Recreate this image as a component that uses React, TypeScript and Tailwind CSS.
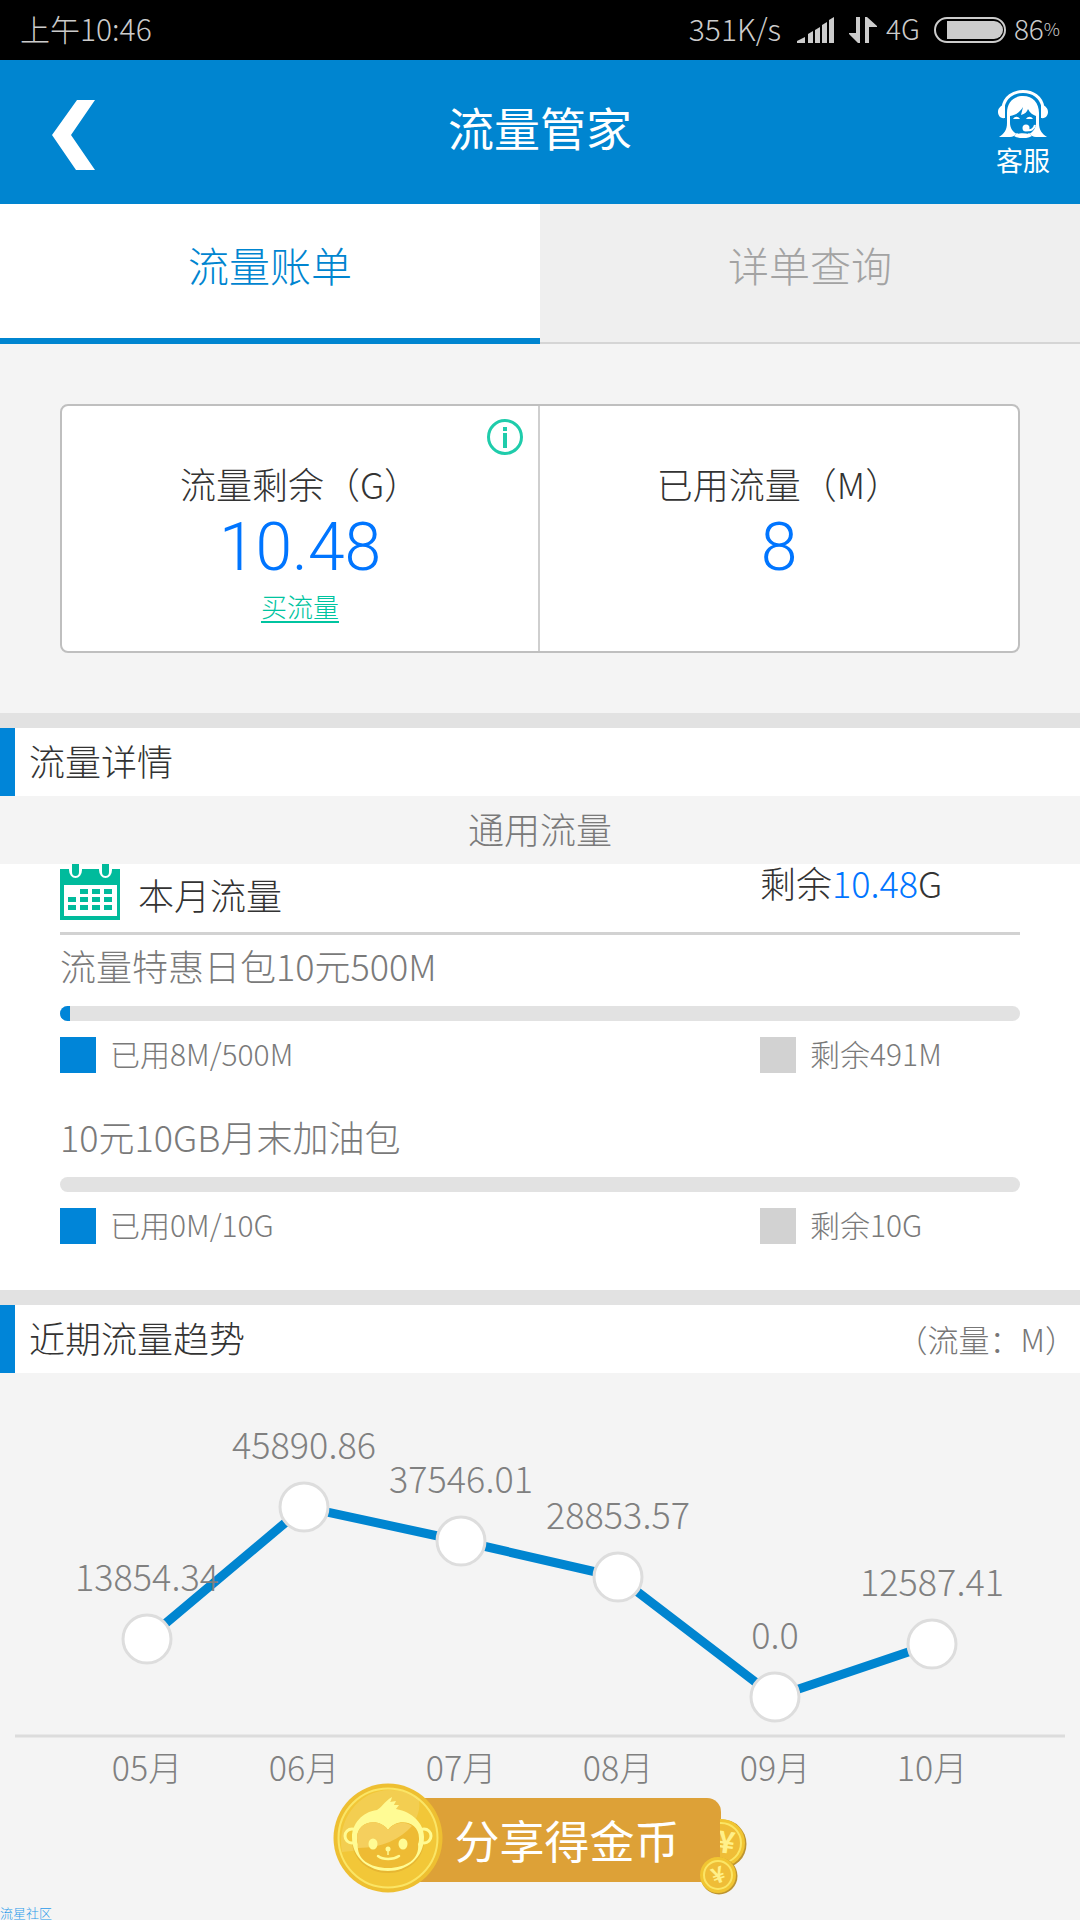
import React from "react";

type Plan = {
  name: string;
  used: string;
  left: string;
  percent: number;
};

const plans: Plan[] = [
  { name: "流量特惠日包10元500M", used: "已用8M/500M", left: "剩余491M", percent: 1 },
  { name: "10元10GB月末加油包", used: "已用0M/10G", left: "剩余10G", percent: 0 },
];

const trend = [
  { month: "05月", value: "13854.34", x: 147, y: 266 },
  { month: "06月", value: "45890.86", x: 304, y: 134 },
  { month: "07月", value: "37546.01", x: 461, y: 168 },
  { month: "08月", value: "28853.57", x: 618, y: 204 },
  { month: "09月", value: "0.0", x: 775, y: 324 },
  { month: "10月", value: "12587.41", x: 932, y: 271 },
];

function StatusBar() {
  return (
    <div className="flex h-[60px] items-center justify-between bg-black pr-5 pb-1 pl-5 text-[30px] text-[#cccccc]">
      <span>上午10:46</span>
      <div className="flex items-center">
        <span>351K/s</span>
        <svg className="mt-1 ml-4 h-[26px] w-[38px]" viewBox="0 0 38 26" fill="#cccccc" aria-hidden="true">
          <path d="M0 26v-2l8-4v6z" />
          <path d="M11 26v-9l5-3v12z" />
          <path d="M18 26V13l5-3v16z" />
          <path d="M25 26V8l5-3v21z" />
          <path d="M32 26V3l5-3v26z" />
        </svg>
        <svg className="mt-1 ml-[14px] h-[26px] w-[28px]" viewBox="0 0 28 26" fill="#cccccc" aria-hidden="true">
          <path d="M7 0h4v26H9L0 17v-1h7z" />
          <path d="M16 26h4V10h8V9L18 0h-2z" />
        </svg>
        <span className="ml-[9px] text-[28px]">4G</span>
        <svg className="mt-1 ml-[14px] h-[26px] w-[72px]" viewBox="0 0 72 26" aria-hidden="true">
          <rect x="1" y="1" width="70" height="24" rx="12" fill="none" stroke="#cccccc" strokeWidth="2" />
          <path d="M13 4h47a9 9 0 0 1 0 18H13z" fill="#cccccc" />
        </svg>
        <span className="ml-2 text-[28px]">86</span>
        <span className="text-[18px]">%</span>
      </div>
    </div>
  );
}

function ServiceIcon() {
  return (
    <svg className="h-[48px] w-[52px]" viewBox="0 0 52 48" aria-hidden="true">
      <path d="M6 17C8 7 16 1.500 26 1.500S44 7 46 17" fill="none" stroke="#fff" strokeWidth="3" />
      <path d="M8 15v13C3 29 1 25 1 22c0-4 3-6 5-7zM44 15v13c5 1 7-3 7-6 0-4-3-6-5-7z" fill="#fff" />
      <path
        d="M26 6C16 6 10 13 10 23v10c0 7-3 11-8 14h11c3 0 5-2 6-3 4 4 10 4 14 0 1 1 3 3 6 3h11c-5-3-8-7-8-14V23C42 13 36 6 26 6z"
        fill="#fff"
      />
      <path
        d="M13 26c6-1 10-4 13-9l-2 8c4-1 6-3 7-6 2 4 5 6 8 7v7c0 5-3 9-7 11-4-1-9-1-12 0-4-2-7-6-7-11z"
        fill="#0085d0"
      />
      <path d="M16 29c2-3 5-3 7 0zM29 29c2-3 5-3 7 0z" fill="#fff" />
      <circle cx="29" cy="38" r="3.500" fill="#fff" />
      <path d="M30 40c4 1 7-1 8-5" fill="none" stroke="#fff" strokeWidth="2" />
      <path d="M20 43c3 3 9 3 12 0l3 3c-5 3-13 3-18 0z" fill="#fff" />
    </svg>
  );
}

function Header() {
  return (
    <header className="grid h-[144px] grid-cols-[1fr_auto_1fr] items-center bg-[#0085d0] font-normal text-white">
      <button type="button" aria-label="返回" className="justify-self-start pt-[6px] pl-[52px]">
        <svg className="h-[70px] w-[44px]" viewBox="0 0 44 70" fill="#fff" aria-hidden="true">
          <path d="M25 0h18L19 35l24 35H24L0 35z" />
        </svg>
      </button>
      <h1 className="pb-3 text-[46px]">流量管家</h1>
      <button type="button" className="flex flex-col items-center justify-self-end pt-2 pr-[30px] text-[27px] leading-[44px]">
        <ServiceIcon />
        <span>客服</span>
      </button>
    </header>
  );
}

function Tabs() {
  return (
    <div role="tablist" className="grid h-[140px] grid-cols-2 text-[41px]">
      <button type="button" role="tab" aria-selected="true" className="border-b-6 border-[#0085d0] bg-white pb-3 text-[#0085d0]">
        流量账单
      </button>
      <button type="button" role="tab" aria-selected="false" className="border-b-2 border-[#d5d5d5] bg-[#efefef] pb-4 text-[#a3a3a3]">
        详单查询
      </button>
    </div>
  );
}

function Summary() {
  return (
    <section className="bg-[#f4f4f4] px-[60px] py-[60px]">
      <div className="grid h-[249px] grid-cols-2 rounded-lg border-2 border-[#bfbfbf] bg-white text-center">
        <div className="relative border-r-2 border-[#cfcfcf] pt-[50px]">
          <button type="button" aria-label="流量说明" className="absolute top-[13px] right-[15px]">
            <svg className="h-[36px] w-[36px]" viewBox="0 0 36 36" aria-hidden="true">
              <circle cx="18" cy="18" r="16.500" fill="none" stroke="#1fccab" strokeWidth="3" />
              <path d="M16 8h4v4h-4zM16 14h4v15h-4z" fill="#1fccab" />
            </svg>
          </button>
          <h2 className="text-[36px] leading-[54px] text-[#333333]">流量剩余（G）</h2>
          <p className="font-[Roboto] text-[66px] leading-[76px] text-[#0075ff]">10.48</p>
          <a href="#buy" className="inline-block text-[26px] leading-[40px] text-[#00c4a0] underline decoration-2 underline-offset-4">
            买流量
          </a>
        </div>
        <div className="pt-[50px]">
          <h2 className="text-[36px] leading-[54px] text-[#333333]">已用流量（M）</h2>
          <p className="font-[Roboto] text-[66px] leading-[76px] text-[#0075ff]">8</p>
        </div>
      </div>
    </section>
  );
}

function SectionHeader({ title, note }: { title: string; note?: string }) {
  return (
    <div className="flex h-[83px] items-center justify-between border-t-[15px] border-[#e2e2e2] bg-white">
      <h2 className="flex h-full items-center border-l-[15px] border-[#0085d8] pb-1 pl-[14px] text-[36px] text-[#333333]">{title}</h2>
      {note && <span className="pr-1 text-[31px] text-[#777777]">{note}</span>}
    </div>
  );
}

function PlanRow({ plan }: { plan: Plan }) {
  return (
    <div className="h-[171px]">
      <h4 className="text-[36px] leading-[60px] text-[#7a7a7a]">{plan.name}</h4>
      <div
        role="progressbar"
        aria-label={plan.name}
        aria-valuenow={plan.percent}
        className="mt-[11px] h-[15px] overflow-hidden rounded-full bg-[#e2e2e2]"
      >
        <div className="h-full bg-[#0085d8]" style={{ width: `${plan.percent}%` }} />
      </div>
      <div className="mt-4 grid grid-cols-[700fr_260fr] text-[30px] leading-[32px] text-[#7a7a7a]">
        <div className="flex gap-[14px]">
          <span className="h-[36px] w-[36px] bg-[#0085d8]" />
          {plan.used}
        </div>
        <div className="flex gap-[14px]">
          <span className="h-[36px] w-[36px] bg-[#d2d2d2]" />
          {plan.left}
        </div>
      </div>
    </div>
  );
}

function CalendarIcon() {
  return (
    <svg className="h-[56px] w-[60px]" viewBox="0 0 60 56" aria-hidden="true">
      <path d="M0 5h60v51H0z" fill="#00bb9c" />
      <path d="M4 21h53v31H4z" fill="#fff" />
      <path d="M9 0h13v6a6.500 8 0 0 1-13 0zM39 0h13v6a6.500 8 0 0 1-13 0z" fill="#fff" />
      <path d="M12 0h7v8a3.500 4 0 0 1-7 0zM42 0h7v8a3.500 4 0 0 1-7 0z" fill="#00bb9c" />
      <path
        d="M20 25h8v5h-8zM32 25h8v5h-8zM44 25h8v5h-8zM8 33h8v5H8zM20 33h8v5h-8zM32 33h8v5h-8zM44 33h8v5h-8zM8 41h8v5H8zM20 41h8v5h-8zM32 41h8v5h-8zM44 41h8v5h-8z"
        fill="#00bb9c"
      />
    </svg>
  );
}

function Details() {
  return (
    <section>
      <SectionHeader title="流量详情" />
      <p className="bg-[#f4f4f4] pb-1 text-center text-[36px] leading-[64px] text-[#7a7a7a]">通用流量</p>
      <div className="bg-white px-[60px] pb-[13px]">
        <div className="grid h-[71px] grid-cols-[700fr_260fr] items-start border-b-3 border-[#d2d2d2] text-[36px] text-[#333333]">
          <h3 className="flex gap-[18px] leading-[60px]">
            <CalendarIcon />
            本月流量
          </h3>
          <p className="leading-[36px]">
            剩余<span className="text-[#0075ff]">10.48</span>G
          </p>
        </div>
        {plans.map((plan) => (
          <PlanRow key={plan.name} plan={plan} />
        ))}
      </div>
    </section>
  );
}

function Trend() {
  return (
    <section>
      <SectionHeader title="近期流量趋势" note="（流量：M）" />
      <svg className="block h-auto w-full overflow-visible" viewBox="0 0 1080 411" role="img" aria-label="近期流量趋势">
        <polyline
          points={trend.map((p) => `${p.x},${p.y}`).join(" ")}
          fill="none"
          stroke="#0085d0"
          strokeWidth="9"
        />
        <path d="M15 363h1050" stroke="#dcdcdc" strokeWidth="3" />
        {trend.map((p) => (
          <g key={p.month} fontSize="36" fill="#808080" textAnchor="middle">
            <circle cx={p.x} cy={p.y} r="24" fill="#fff" stroke="#dddddd" strokeWidth="3" />
            <text x={p.x} y={p.y - 48}>
              {p.value}
            </text>
            <text x={p.x} y="408" fontSize="34">
              {p.month}
            </text>
          </g>
        ))}
      </svg>
    </section>
  );
}

function MonkeyCoin() {
  return (
    <svg className="relative h-[110px] w-[110px]" viewBox="0 0 110 110" aria-hidden="true">
      <circle cx="55" cy="55" r="54.500" fill="#eebf31" />
      <circle cx="55" cy="55" r="49.500" fill="#f2c738" stroke="#fbe565" strokeWidth="2" />
      <path d="M9 69C3 38 25 7 57 7c12 0 22 4 29 10 4 24-22 48-77 52z" fill="#fff" opacity=".13" />
      <g transform="translate(0 2)" fill="#dba62b" opacity=".5">
        <path d="M44 28c4-2 7-8 13-14 0 3 0 4-1 5l6-1-2 4h4l-2 4c17 2 28 15 29 29 0 20-17 33-36 33S19 75 19 55c0-13 10-25 25-27z" />
      </g>
      <circle cx="19" cy="53" r="7" fill="#f2c738" stroke="#fffb94" strokeWidth="3" />
      <circle cx="91" cy="53" r="7" fill="#f2c738" stroke="#fffb94" strokeWidth="3" />
      <path
        d="M44 27c5-3 7-8 15-13-1 3-1 4-2 5l6-1-2 4h5l-3 4c17 3 28 15 28 28 0 21-17 34-36 34S19 75 19 54c0-13 10-25 25-27z"
        fill="#fffb94"
      />
      <path
        d="M55 47c-9-13-31-9-31 8 0 2 0 4 1 6-2 15 12 24 30 24s32-9 30-24c1-2 1-4 1-6 0-17-22-21-31-8z"
        fill="#eebb34"
      />
      <path d="M55 47c-9-13-31-9-31 8l1 10c24 0 42-9 54-22-8-6-19-3-24 4z" fill="#f5cf5d" />
      <ellipse cx="40" cy="61" rx="4.500" ry="5.500" fill="#fffb94" />
      <ellipse cx="70" cy="61" rx="4.500" ry="5.500" fill="#fffb94" />
      <path d="M45 73c5 4 15 4 21 0" fill="none" stroke="#fffb94" strokeWidth="2.500" strokeLinecap="round" />
      <circle cx="55" cy="66" r="2.500" fill="#fffb94" />
      <path d="M55 67v5" stroke="#fffb94" strokeWidth="1.500" />
    </svg>
  );
}

function SmallCoins() {
  return (
    <svg className="relative h-[78px] w-[48px]" viewBox="0 0 48 78" aria-hidden="true">
      <defs>
        <clipPath id="behind">
          <rect x="21" y="0" width="27" height="78" />
        </clipPath>
      </defs>
      <g clipPath="url(#behind)">
        <circle cx="23" cy="27" r="24.500" fill="#bd9430" />
        <circle cx="22" cy="26" r="24" fill="#f1c532" />
        <circle cx="22" cy="26" r="20" fill="#efbd37" stroke="#fbe565" strokeWidth="2" />
        <text x="27" y="36" fontSize="30" fontWeight="700" fill="#fff08a" textAnchor="middle" transform="rotate(8 27 26)">
          ¥
        </text>
      </g>
      <circle cx="20" cy="59" r="18.500" fill="#bd9430" />
      <circle cx="19" cy="58" r="18" fill="#f1c532" />
      <circle cx="19" cy="58" r="14" fill="#efbd37" stroke="#fbe565" strokeWidth="2" />
      <text x="19" y="66" fontSize="22" fontWeight="700" fill="#fff08a" textAnchor="middle" transform="rotate(-20 19 58)">
        ¥
      </text>
    </svg>
  );
}

function ShareButton() {
  return (
    <button type="button" className="mx-auto -mt-px flex items-center text-[45px] font-normal text-white">
      <MonkeyCoin />
      <span className="mt-1 -ml-[55px] flex h-[84px] items-center rounded-r-[14px] bg-[#dda137] pr-[41px] pl-[66px]">分享得金币</span>
      <span className="-mb-[2px] -ml-[22px] flex self-end">
        <SmallCoins />
      </span>
    </button>
  );
}

export default function App() {
  return (
    <div className='min-h-screen overflow-hidden bg-[#f4f4f4] font-["Noto_Sans_CJK_SC",sans-serif] font-light'>
      <StatusBar />
      <Header />
      <Tabs />
      <main>
        <Summary />
        <Details />
        <Trend />
        <ShareButton />
      </main>
      <footer className="mt-3 text-[13px] leading-[15px] text-[#2b9bea]">流星社区</footer>
    </div>
  );
}
